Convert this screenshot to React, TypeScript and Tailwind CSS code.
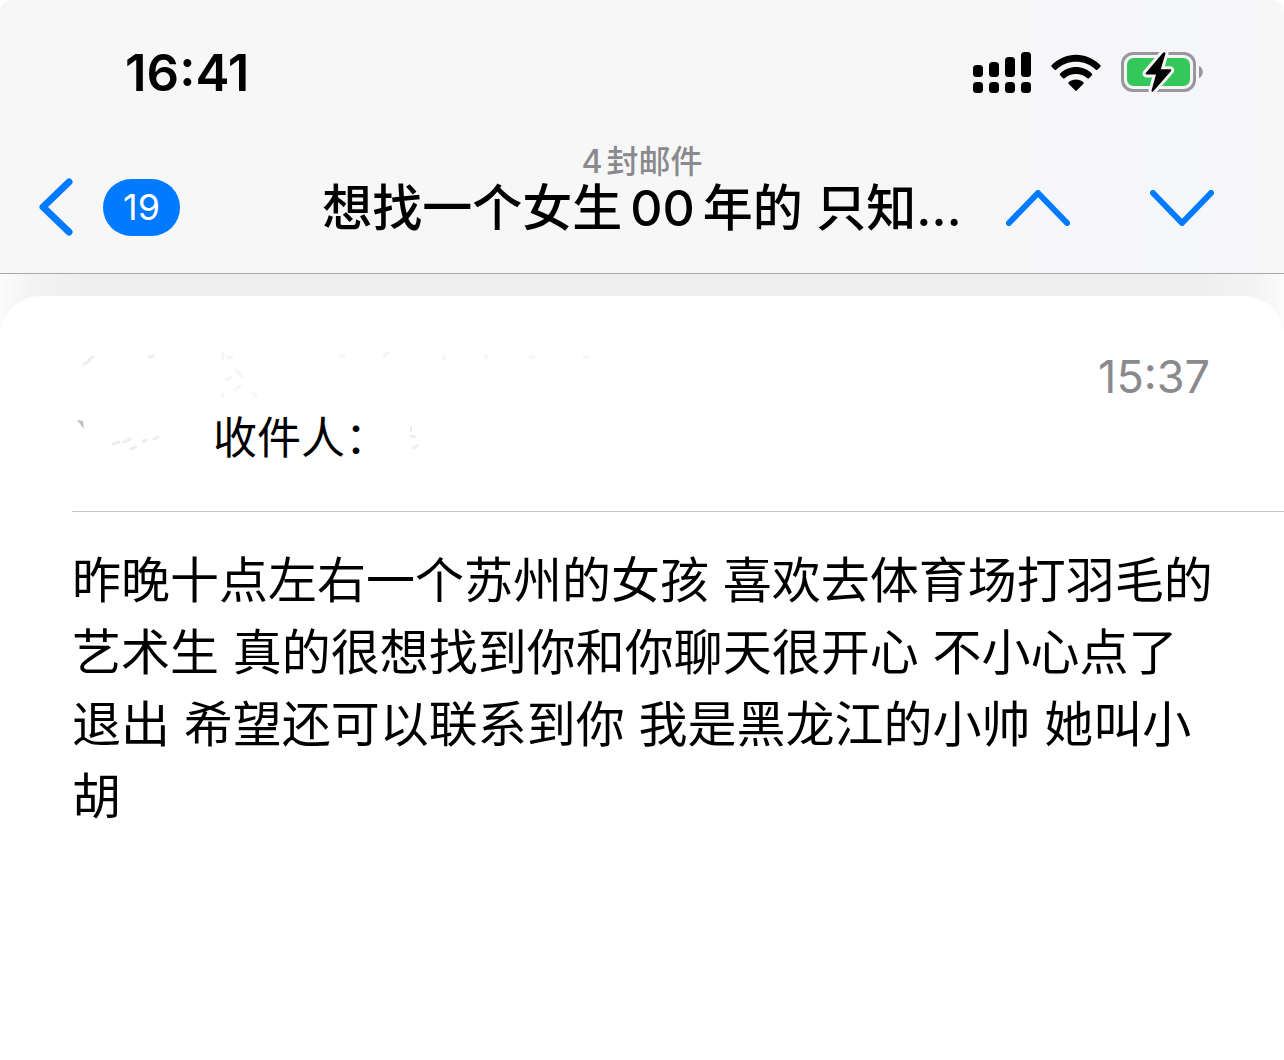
const fontStack = "font-['Inter','Noto_Sans_CJK_SC',sans-serif]";

function SignalIcon() {
  return (
    <svg className="h-[42px] w-[58px]" viewBox="0 0 58 42" aria-hidden="true">
      <rect x="0" y="13" width="10" height="12" rx="3.5" />
      <rect x="16" y="10" width="10" height="15" rx="3.5" />
      <rect x="32" y="5" width="10" height="20" rx="3.5" />
      <rect x="48" y="0" width="10" height="25" rx="3.5" />
      <rect x="0" y="30" width="10" height="11" rx="3.5" />
      <rect x="16" y="30" width="10" height="11" rx="3.5" />
      <rect x="32" y="30" width="10" height="11" rx="3.5" />
      <rect x="48" y="30" width="10" height="11" rx="3.5" />
    </svg>
  );
}

function WifiIcon() {
  return (
    <svg className="h-[38px] w-[50px]" viewBox="0 0 50 38" aria-hidden="true">
      <path d="M0.6 11.2C14 -2.9 36 -2.9 49.4 11.2Q50 12 49.4 12.8L46.4 15.7Q45.6 16.4 44.8 15.7C33.6 5.2 16.4 5.2 5.2 15.7Q4.4 16.4 3.6 15.7L0.6 12.8Q0 12 0.6 11.2Z" />
      <path d="M9 19.7C17.8 10.9 32.2 10.9 41 19.7Q41.6 20.5 41 21.3L37.9 24.3Q37.1 25 36.3 24.3C29.9 18.7 20.1 18.7 13.7 24.3Q12.9 25 12.1 24.3L9 21.3Q8.4 20.5 9 19.7Z" />
      <path d="M17.6 28.2C21.7 24.6 28.3 24.6 32.4 28.2Q33.1 29 32.4 29.8L25.8 36.5Q25 37.3 24.2 36.5L17.6 29.8Q16.9 29 17.6 28.2Z" />
    </svg>
  );
}

function BatteryIcon() {
  return (
    <svg className="h-[42px] w-[82px]" viewBox="0 0 82 42" aria-hidden="true">
      <rect x="1.5" y="1.5" width="72" height="37" rx="10.5" fill="none" stroke="#98989a" strokeWidth="3" />
      <path d="M78 14C83 16 83 24 78 26Z" fill="#98989a" />
      <rect x="6" y="6" width="63" height="28" rx="6.5" fill="#34c759" />
      <path
        d="M42 0.8L24.8 21Q24 22.5 26 22.5H35L30.5 38.5Q30.5 40.5 32.3 39.2L50 18.9Q50.8 17.3 49 17.2H39.8L44.5 1.6Q44.3 -0.8 42 0.8Z"
        stroke="#f6f6f7"
        strokeWidth="6"
        paintOrder="stroke"
        strokeLinejoin="round"
      />
    </svg>
  );
}

function BackIcon() {
  return (
    <svg className="h-[58px] w-[34px]" viewBox="0 0 34 58" fill="none" stroke="#007aff" strokeWidth="7" strokeLinecap="round" strokeLinejoin="round" aria-hidden="true">
      <path d="M30 4L4 29L30 54" />
    </svg>
  );
}

function StepIcon({ d }: { d: string }) {
  return (
    <svg className="h-9 w-16" viewBox="0 0 64 36" fill="none" stroke="#007aff" strokeWidth="6" strokeLinecap="round" strokeLinejoin="round" aria-hidden="true">
      <path d={d} />
    </svg>
  );
}

function Smudges() {
  return (
    <svg className="absolute top-0 left-0 h-[170px] w-[600px]" viewBox="0 0 600 170" fill="none" strokeLinecap="round" aria-hidden="true">
      <g stroke="#d4d6da" strokeWidth="3" opacity=".4">
        <path d="M84 68l4-2M89 64l4-3" />
        <path d="M149 61l4-1" />
        <path d="M113 148l6-2M124 146l6-3M131 153l5-2M143 145l3-1M154 143l4-2" />
        <path d="M411 140l4 1M413 152l4-2" />
      </g>
      <g stroke="#ececee" strokeWidth="3" opacity=".5">
        <path d="M223 57v5M228 62l4-1M236 74l5 6M226 84l5-3M223 98v2M256 100l-3-3M240 90l-5 4" />
        <path d="M340 60h4M384 60l4-3M444 60v3M486 60v2M530 61h4M584 61h4" />
      </g>
      <path d="M77 124l6 1l1 8z" fill="#9fa4ae" opacity=".7" />
      <path d="M411 131v4" stroke="#ddd" strokeWidth="2" opacity=".6" />
    </svg>
  );
}

export default function App() {
  return (
    <div className={`min-h-screen bg-white text-black ${fontStack}`} lang="zh-CN">
      <header className="rounded-t-xl border-b border-[#a8a8a8] bg-[linear-gradient(90deg,#f7f7f7_70%,#f5f6f9_92%,#f7f7f8)]">
        <div className="flex h-[146px] items-center justify-between pr-[81px] pl-[125px]">
          <time className="text-[51px] leading-[60px] font-semibold">16:41</time>
          <div className="flex items-center gap-5">
            <SignalIcon />
            <WifiIcon />
            <BatteryIcon />
          </div>
        </div>
        <nav className="grid h-[127px] grid-cols-[1fr_auto_1fr] items-start px-[39px]">
          <button type="button" className="mt-8 flex items-center gap-[30px] justify-self-start" aria-label="返回，19 封未读">
            <BackIcon />
            <span className="flex h-[57px] w-[77px] items-center justify-center rounded-full bg-[#007aff] text-[36px] leading-none text-white">19</span>
          </button>
          <div className="text-center whitespace-nowrap">
            <p className="text-[32px] leading-8 font-medium text-[#8a8a8e]">
              <span className="mr-1">4</span>封邮件
            </p>
            <h1 className="text-[50px] leading-[60px] font-medium">
              想找一个女生<span className="mx-2">00</span>年的 只知…
            </h1>
          </div>
          <div className="mt-11 mr-[31px] flex gap-20 justify-self-end">
            <button type="button" aria-label="上一封">
              <StepIcon d="M3 33L32 3L61 33" />
            </button>
            <button type="button" aria-label="下一封">
              <StepIcon d="M3 3L32 33L61 3" />
            </button>
          </div>
        </nav>
      </header>
      <main className="bg-[linear-gradient(90deg,#fbfbfb,#f3f3f3_32px,#efefef_80px,#efefef_calc(100%-80px),#f3f3f3_calc(100%-32px),#fbfbfb)] pt-[22px]">
        <article className="relative rounded-t-[40px] bg-white pl-[72px]">
          <Smudges />
          <div className="flex h-[215px] justify-between pr-[74px]">
            <p className="mt-[109px] ml-[141px] text-[44px] leading-[66px]">收件人：</p>
            <time className="mt-[54px] text-[45px] leading-[54px] text-[#8a8a8e]">15:37</time>
          </div>
          <hr className="border-[#c6c6c8]" />
          <p className="mt-[33px] pr-16 pb-20 text-[49px] leading-[72px]">
            昨晚十点左右一个苏州的女孩 喜欢去体育场打羽毛的艺术生 真的很想找到你和你聊天很开心 不小心点了退出 希望还可以联系到你 我是黑龙江的小帅 她叫小胡
          </p>
        </article>
      </main>
    </div>
  );
}
